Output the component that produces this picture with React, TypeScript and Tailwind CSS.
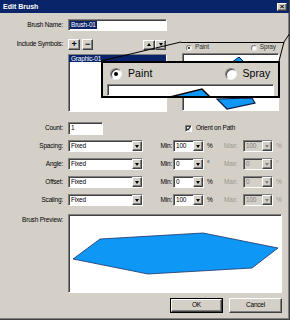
import React from 'react'

const sunken = 'border border-t-[#808080] border-l-[#808080] border-b-white border-r-white shadow-[inset_1px_1px_0_#404040]'
const raised = 'border border-t-white border-l-white border-b-[#404040] border-r-[#404040] shadow-[inset_-1px_-1px_0_#808080] bg-[#d4d0c8]'

const Arrow = ({ dim }: { dim?: boolean }) => (
  <span className={`w-0 h-0 border-l-[2.5px] border-r-[2.5px] border-t-[3px] border-l-transparent border-r-transparent ${dim ? 'border-t-[#808080]' : 'border-t-black'}`} />
)

const Combo = ({ value, w, dim }: { value: string; w: string; dim?: boolean }) => (
  <div className={`${w} h-[12px] flex ${sunken} ${dim ? 'bg-[#d4d0c8] text-[#808080]' : 'bg-white'}`}>
    <span className="flex-1 pl-[2px] leading-[10px]">{value}</span>
    <span className={`w-[10px] h-full flex items-center justify-center ${raised}`}>
      <Arrow dim={dim} />
    </span>
  </div>
)

const Label = ({ children }: { children: React.ReactNode }) => (
  <span className="w-[63px] shrink-0 text-right">{children}</span>
)

const PropRow = ({ label, min, unit }: { label: string; min: string; unit: string }) => (
  <div className="flex items-center h-[12px]">
    <Label>{label}</Label>
    <div className="ml-[5px]"><Combo value="Fixed" w="w-[75px]" /></div>
    <span className="w-[30px] text-right pr-[1px]">Min:</span>
    <Combo value={min} w="w-[31px]" />
    <span className="w-[20px] pl-[3px]">{unit}</span>
    <span className="w-[19px] text-[#9a978f]">Max:</span>
    <Combo value={min} w="w-[30px]" dim />
    <span className="pl-[3px] text-[#9a978f]">{unit}</span>
  </div>
)

const SmallRadio = ({ on }: { on?: boolean }) => (
  <span className="w-[6px] h-[6px] rounded-full bg-white border border-t-[#808080] border-l-[#808080] border-b-[#e8e8e8] border-r-[#e8e8e8] flex items-center justify-center">
    {on && <span className="w-[2px] h-[2px] rounded-full bg-black" />}
  </span>
)

const BigRadio = ({ on }: { on?: boolean }) => (
  <span className="w-[12px] h-[12px] rounded-full bg-white border-[1.5px] border-t-[#808080] border-l-[#808080] border-b-[#f0f0f0] border-r-[#f0f0f0] shadow-[inset_1px_1px_0_#404040] flex items-center justify-center">
    {on && <span className="w-[4px] h-[4px] rounded-full bg-black" />}
  </span>
)

export default function App() {
  return (
    <div className="relative w-[290px] h-[320px] overflow-hidden bg-[#d4d0c8] border-r border-b border-[#404040] shadow-[inset_-1px_-1px_0_#808080] font-['Liberation_Sans',Arial,sans-serif] text-[6.5px] tracking-[-0.2px] text-black leading-none select-none">
      {/* title bar */}
      <div className="h-[13px] bg-[#0a246a] flex items-center justify-between pl-[3px] pr-[2px]">
        <span className="text-white font-bold text-[7px] tracking-normal">Edit Brush</span>
        <span className={`w-[10px] h-[8px] flex items-center justify-center text-[8px] font-bold ${raised}`}>×</span>
      </div>

      {/* brush name */}
      <div className="flex items-center mt-[6px] h-[12px]">
        <Label>Brush Name:</Label>
        <div className={`ml-[5px] w-[99px] h-[12px] bg-white flex items-center pl-[1px] ${sunken}`}>
          <span className="bg-[#0a246a] text-white px-[1px] leading-[8px]">Brush-01</span>
        </div>
      </div>

      {/* symbols + paint/spray panel */}
      <div className="flex mt-[8px]">
        <div className="w-[167px] flex flex-col">
          <div className="flex items-center h-[11px]">
            <Label>Include Symbols:</Label>
            <span className={`ml-[5px] w-[12px] h-[11px] flex items-center justify-center text-[9px] font-bold ${raised}`}>+</span>
            <span className={`ml-[2px] w-[11px] h-[11px] flex items-center justify-center text-[9px] font-bold ${raised}`}>−</span>
            <span className={`ml-[50px] w-[12px] h-[10px] flex items-center justify-center ${raised}`}>
              <span className="w-0 h-0 border-l-[2.5px] border-r-[2.5px] border-b-[3px] border-l-transparent border-r-transparent border-b-black" />
            </span>
            <span className={`w-[11px] h-[10px] flex items-center justify-center ${raised}`}>
              <Arrow />
            </span>
          </div>
          <div className={`ml-[68px] mt-[4px] w-[99px] h-[58px] bg-white ${sunken}`}>
            <div className="bg-[#0a246a] text-white pl-[2px] h-[7px] leading-[7px]">Graphic-01</div>
          </div>
        </div>
        <div className="ml-[15px] w-[101px] flex flex-col pt-[5px]">
          <div className="flex items-center h-[7px] text-[#333]">
            <span className="ml-[4px]"><SmallRadio on /></span>
            <span className="ml-[3px]">Paint</span>
            <span className="ml-[42px]"><SmallRadio /></span>
            <span className="ml-[3px]">Spray</span>
          </div>
          <div className={`relative mt-[2px] w-[97px] h-[58px] bg-white ${sunken}`}>
            <svg className="absolute inset-0" width="97" height="58">
              <polygon points="48,9 56,3 62,9" fill="#0f97f5" stroke="#101a40" strokeWidth="1" />
              <polygon points="34,45 44,55 72,49 69,44" fill="#0f97f5" stroke="#101a40" strokeWidth="1.2" />
            </svg>
          </div>
        </div>
      </div>

      {/* count + orient */}
      <div className="flex items-center mt-[10px] h-[13px]">
        <Label>Count:</Label>
        <div className={`ml-[5px] w-[35px] h-[13px] bg-white pl-[2px] flex items-center ${sunken}`}>1</div>
        <span className={`ml-[82px] w-[7px] h-[7px] bg-white flex items-center justify-center text-[7px] font-bold ${sunken}`}>✓</span>
        <span className="ml-[4px]">Orient on Path</span>
      </div>

      <div className="flex flex-col gap-[6px] mt-[5px]">
        <PropRow label="Spacing:" min="100" unit="%" />
        <PropRow label="Angle:" min="0" unit="°" />
        <PropRow label="Offset:" min="0" unit="%" />
        <PropRow label="Scaling:" min="100" unit="%" />
      </div>

      {/* preview */}
      <div className="flex mt-[8px]">
        <span className="w-[63px] text-right pt-[3px]">Brush Preview:</span>
        <div className={`ml-[5px] w-[214px] h-[79px] bg-white ${sunken}`}>
          <svg width="212" height="77">
            <polygon points="4,44 31,24 134,18 209,33 183,53 79,59" fill="#0f97f5" stroke="#1c3366" strokeWidth="0.8" />
          </svg>
        </div>
      </div>

      {/* buttons */}
      <div className="flex justify-end gap-[6px] mt-[5px] pr-[7px]">
        <div className="w-[53px] h-[15px] border border-black">
          <div className={`w-full h-full flex items-center justify-center ${raised}`}>OK</div>
        </div>
        <div className={`w-[53px] h-[15px] flex items-center justify-center ${raised}`}>Cancel</div>
      </div>

      {/* magnification callout */}
      <svg className="absolute left-0 top-0 pointer-events-none" width="290" height="320">
        <line x1="101" y1="61" x2="181" y2="42" stroke="black" strokeWidth="1" />
        <line x1="181" y1="42.5" x2="284" y2="42.5" stroke="black" strokeWidth="1" />
        <line x1="284" y1="42" x2="279" y2="61" stroke="black" strokeWidth="1" />
        <line x1="284" y1="42" x2="290" y2="33" stroke="black" strokeWidth="1" />
      </svg>
      <div className="absolute left-[101px] top-[61px] w-[179px] h-[37px] border-2 border-black bg-[#d4d0c8] overflow-hidden flex flex-col">
        <div className="flex items-center h-[21px] text-[10.5px] tracking-[0.1px]">
          <span className="ml-[7px]"><BigRadio on /></span>
          <span className="ml-[6px]">Paint</span>
          <span className="ml-[73px]"><BigRadio /></span>
          <span className="ml-[5px]">Spray</span>
        </div>
        <div className={`relative ml-[4px] w-[167px] flex-1 bg-white ${sunken}`}>
          <svg className="absolute inset-0" width="167" height="16">
            <polygon points="50,16 94,4 105,16" fill="#0f97f5" />
            <polyline points="62,12 94,4 103,13" fill="none" stroke="black" strokeWidth="1.5" />
          </svg>
        </div>
      </div>
    </div>
  )
}
